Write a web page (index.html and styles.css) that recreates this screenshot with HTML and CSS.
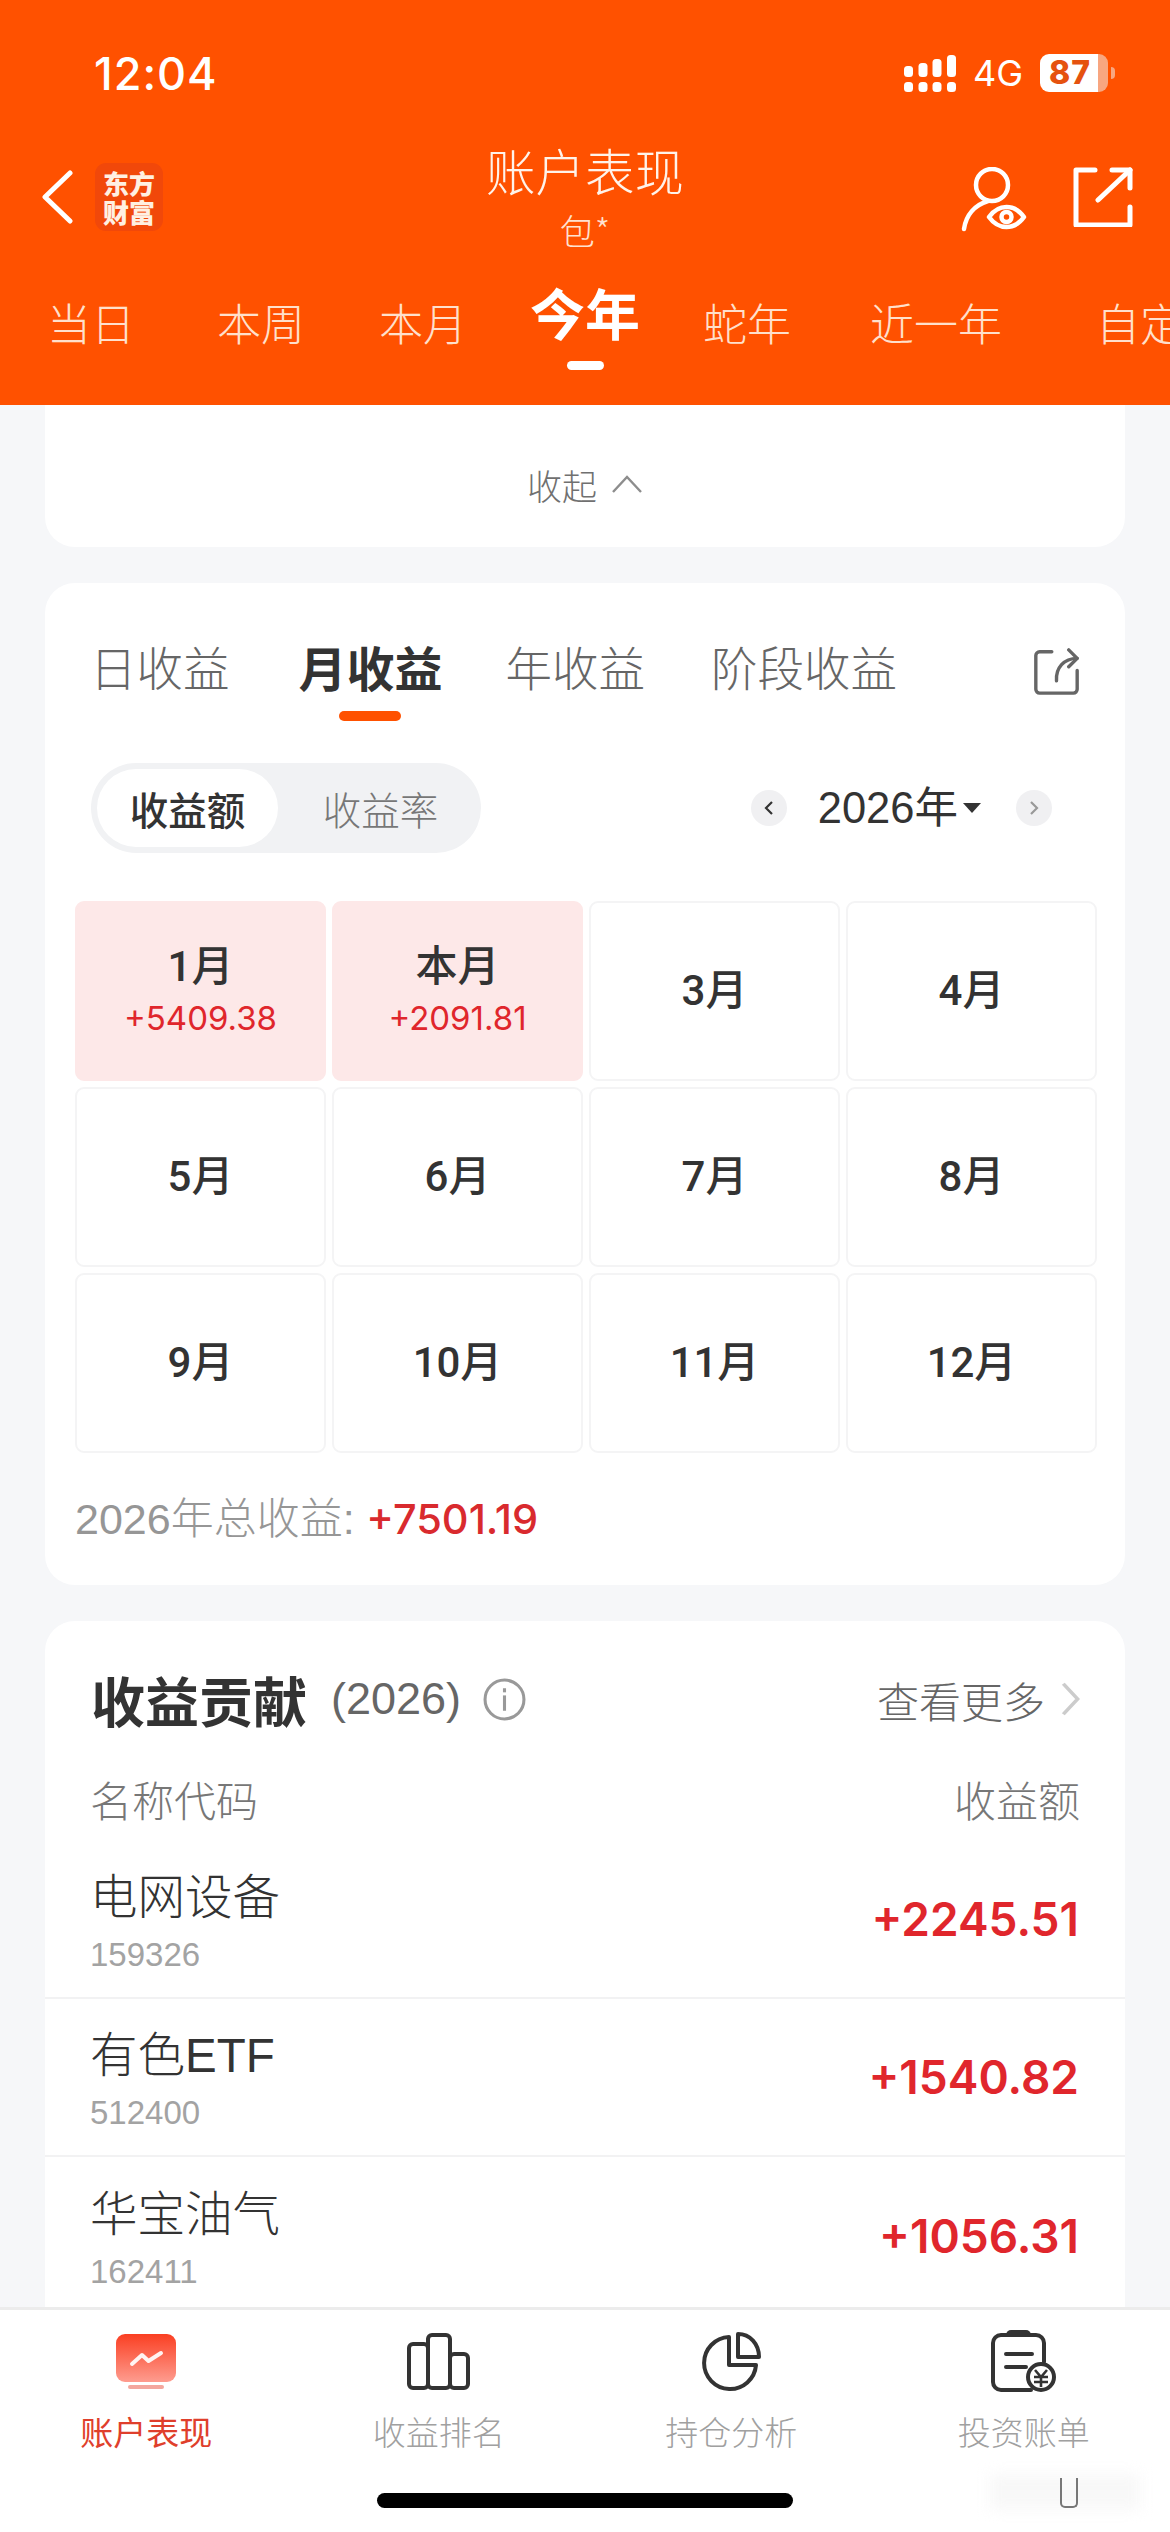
FILE: index.html
```html
<!DOCTYPE html>
<html lang="zh">
<head>
<meta charset="utf-8">
<title>账户表现</title>
<link rel="stylesheet" href="styles.css">
</head>
<body>
<div class="phone">
  <header class="top">
    <div class="status">
      <span class="clock">12:04</span>
      <div class="status-right">
        <svg class="signal" width="52" height="37" viewBox="0 0 52 37"><g fill="#fff"><rect x="0" y="11" width="9" height="11" rx="3.5"/><rect x="14.5" y="8" width="9" height="14" rx="3.5"/><rect x="28.5" y="4" width="9" height="18" rx="3.5"/><rect x="43" y="0" width="9" height="22" rx="3.5"/><rect x="0" y="27" width="9" height="10" rx="3.5"/><rect x="14.5" y="27" width="9" height="10" rx="3.5"/><rect x="28.5" y="27" width="9" height="10" rx="3.5"/><rect x="43" y="27" width="9" height="10" rx="3.5"/></g></svg>
        <span class="net">4G</span>
        <div class="battery"><span class="battery-num">87</span><i class="battery-tip"></i></div>
      </div>
    </div>
    <div class="nav">
      <div class="nav-left">
        <svg class="back" width="34" height="54" viewBox="0 0 34 54"><path d="M30 3 5 27l25 24" fill="none" stroke="#fff" stroke-width="5" stroke-linecap="round" stroke-linejoin="round"/></svg>
        <div class="logo">东方<br>财富</div>
      </div>
      <div class="nav-title"><div class="title">账户表现</div><div class="subtitle">包*</div></div>
      <div class="nav-right">
        <svg class="watch" width="66" height="66" viewBox="0 0 66 66"><g fill="none" stroke="#fff" stroke-width="4.5" stroke-linecap="round" stroke-linejoin="round"><circle cx="31" cy="18" r="16"/><path d="M3 62c2-14 11-24 24-28"/><path d="M28 50c5-7 11-10 17.500-10s12.500 3 17.500 10c-5 7-11 10-17.500 10s-12.500-3-17.500-10z"/><circle cx="45.500" cy="50" r="5"/></g></svg>
        <svg class="open" width="60" height="60" viewBox="0 0 60 60"><g fill="none" stroke="#fff" stroke-width="5" stroke-linecap="round" stroke-linejoin="round"><path d="M22 3H3v55h54V40"/><path d="M25 33 57 3"/><path d="M39 3h18v18"/></g></svg>
      </div>
    </div>
    <div class="periods">
      <span class="period p1">当日</span>
      <span class="period p2">本周</span>
      <span class="period p3">本月</span>
      <span class="period p4 on">今年</span>
      <span class="period p5">蛇年</span>
      <span class="period p6">近一年</span>
      <span class="period p7">自定义</span>
    </div>
  </header>

  <main class="content">
    <section class="card collapse-card">
      <span class="collapse-text">收起</span>
      <svg width="32" height="20" viewBox="0 0 32 20"><path d="M2 18 16 3l14 15" fill="none" stroke="#8d8d8d" stroke-width="2.400"/></svg>
    </section>

    <section class="card month-card">
      <div class="tabs">
        <span class="tab">日收益</span>
        <span class="tab tab-on">月收益</span>
        <span class="tab">年收益</span>
        <span class="tab">阶段收益</span>
        <svg class="tab-share" width="47" height="47" viewBox="0 0 50 50"><g fill="none" stroke="#666" stroke-width="3.600" stroke-linecap="round" stroke-linejoin="round"><path d="M20 4H7a4 4 0 0 0-4 4v36a4 4 0 0 0 4 4h36a4 4 0 0 0 4-4V24"/><path d="M25 35c-1-14 8-24 22-24"/><path d="M38 2l9 9-9 9"/></g></svg>
      </div>
      <div class="controls">
        <div class="seg"><span class="seg-item seg-on">收益额</span><span class="seg-item">收益率</span></div>
        <div class="year">
          <span class="round-btn"><svg width="10" height="16" viewBox="0 0 10 16"><path d="M8 2 2 8l6 6" fill="none" stroke="#333" stroke-width="2.200"/></svg></span>
          <span class="year-text">2026年</span>
          <i class="caret"></i>
          <span class="round-btn"><svg width="10" height="16" viewBox="0 0 10 16"><path d="m2 2 6 6-6 6" fill="none" stroke="#999" stroke-width="2.200"/></svg></span>
        </div>
      </div>
      <div class="months">
        <div class="cell gain"><b>1月</b><em>+5409.38</em></div>
        <div class="cell gain"><b>本月</b><em>+2091.81</em></div>
        <div class="cell"><b>3月</b></div>
        <div class="cell"><b>4月</b></div>
        <div class="cell"><b>5月</b></div>
        <div class="cell"><b>6月</b></div>
        <div class="cell"><b>7月</b></div>
        <div class="cell"><b>8月</b></div>
        <div class="cell"><b>9月</b></div>
        <div class="cell"><b>10月</b></div>
        <div class="cell"><b>11月</b></div>
        <div class="cell"><b>12月</b></div>
      </div>
      <div class="total"><span class="total-label">2026年总收益:</span> <span class="total-num">+7501.19</span></div>
    </section>

    <section class="card contrib-card">
      <div class="contrib-head">
        <span class="contrib-title">收益贡献</span>
        <span class="contrib-year">(2026)</span>
        <svg class="info" width="43" height="43" viewBox="0 0 42 42"><circle cx="21" cy="21" r="19" fill="none" stroke="#999" stroke-width="3"/><rect x="19.500" y="17" width="3" height="15" fill="#999"/><rect x="19.500" y="10" width="3" height="4" fill="#999"/></svg>
        <span class="more">查看更多</span>
        <svg class="more-arrow" width="22" height="36" viewBox="0 0 20 38" preserveAspectRatio="none"><path d="m3 3 13 16L3 35" fill="none" stroke="#ccc" stroke-width="3.400"/></svg>
      </div>
      <div class="col-head"><span>名称代码</span><span>收益额</span></div>
      <div class="row"><div><div class="row-name">电网设备</div><div class="row-code">159326</div></div><span class="row-val">+2245.51</span></div>
      <div class="row"><div><div class="row-name">有色ETF</div><div class="row-code">512400</div></div><span class="row-val">+1540.82</span></div>
      <div class="row row-last"><div><div class="row-name">华宝油气</div><div class="row-code">162411</div></div><span class="row-val">+1056.31</span></div>
    </section>
  </main>

  <nav class="bottom">
    <div class="bottom-items">
      <div class="item item-on">
        <div class="icon"><svg width="60" height="55" viewBox="0 0 60 55"><defs><linearGradient id="g" x1="0" y1="0" x2="0" y2="1"><stop offset="0" stop-color="#fa3f22"/><stop offset="1" stop-color="#fe9c8f"/></linearGradient></defs><rect x="0" y="0" width="60" height="48" rx="9" fill="url(#g)"/><rect x="12" y="51" width="36" height="4" rx="2" fill="#f4a79e"/><path d="m16 30 10-9 6.500 6L45 19" fill="none" stroke="#fff" stroke-width="4" stroke-linecap="round" stroke-linejoin="round" opacity=".92"/></svg></div>
        <span>账户表现</span>
      </div>
      <div class="item">
        <div class="icon"><svg width="63" height="57" viewBox="0 0 63 57"><g fill="none" stroke="#333" stroke-width="4" stroke-linejoin="round"><rect x="2" y="11" width="19" height="44" rx="4"/><rect x="21" y="2" width="22" height="53" rx="4"/><rect x="43" y="21" width="18" height="34" rx="4"/></g></svg></div>
        <span>收益排名</span>
      </div>
      <div class="item">
        <div class="icon"><svg width="59" height="59" viewBox="0 0 59 59"><g fill="none" stroke="#333" stroke-width="4" stroke-linejoin="round"><path d="M27 5A26 26 0 1 0 54 33H27z"/><path d="M36 2c12 0 21 10 21 23H36z"/></g></svg></div>
        <span>持仓分析</span>
      </div>
      <div class="item">
        <div class="icon"><svg width="65" height="62" viewBox="0 0 65 62"><g fill="none" stroke="#333" stroke-width="4" stroke-linecap="round"><path d="M40 60H10a8 8 0 0 1-8-8V13a8 8 0 0 1 8-8h35a8 8 0 0 1 8 8v19"/><path d="M15 24h26M15 37h20"/></g><path d="M15 5a5 5 0 0 1 5-5h15a5 5 0 0 1 5 5z" fill="#333"/><circle cx="50" cy="47" r="13" fill="#fff" stroke="#333" stroke-width="4"/><path d="m44 40 6 7 6-7M43 47h14M43 52h14M50 47v10" fill="none" stroke="#333" stroke-width="2.600"/></svg></div>
        <span>投资账单</span>
      </div>
    </div>
    <div class="home-bar"></div>
    <div class="mark"></div>
    <div class="mark-u"></div>
  </nav>
</div>
</body>
</html>
```

FILE: styles.css
```css
* { box-sizing: border-box; }
html, body { margin: 0; padding: 0; }
body { width: 1170px; height: 2532px; overflow: hidden; background: #f6f7f9; font-family: "Noto Sans CJK SC", "Noto Sans", sans-serif; }
em, i { font-style: normal; }
svg { display: block; flex: none; }
.phone { width: 1170px; height: 2532px; display: flex; flex-direction: column; overflow: hidden; }

.top { height: 405px; flex: none; background: #ff5100; color: #fff; overflow: hidden; }
.status { height: 150px; padding: 48px 62px 0 94px; display: flex; justify-content: space-between; align-items: flex-start; }
.clock { font: 500 45px/52px Inter, sans-serif; letter-spacing: 1px; }
.status-right { display: flex; align-items: center; gap: 17px; height: 50px; }
.net { font: 400 36px/40px Inter, sans-serif; }
.battery { position: relative; width: 68px; height: 38px; background: linear-gradient(90deg, #fff 86%, #f8a680 86%); border-radius: 9px; text-align: center; }
.battery-num { display: block; color: #e5520f; font: 800 32px/38px Inter, sans-serif; letter-spacing: 1px; padding-right: 8px; }
.battery-tip { position: absolute; right: -7px; top: 13px; width: 4px; height: 12px; border-radius: 0 4px 4px 0; background: #f8a680; }

.nav { height: 118px; display: flex; align-items: flex-start; padding: 0 37px 0 40px; position: relative; }
.nav-left { display: flex; align-items: center; gap: 21px; width: 300px; padding-top: 13px; }
.logo { width: 68px; height: 68px; padding-top: 5px; background: #f1480a; border-radius: 11px; text-align: center; font: 900 26px/29px "Noto Sans CJK SC", sans-serif; color: #fff0e2; }
.nav-title { position: absolute; left: 0; right: 0; top: -11px; text-align: center; }
.title { font-size: 49.500px; line-height: 62px; color: #fff3ea; font-weight: 300; }
.subtitle { font-size: 35px; line-height: 44px; margin-top: 7px; color: #ffe2d0; font-weight: 300; }
.nav-right { margin-left: auto; display: flex; align-items: flex-start; gap: 46px; padding-top: 17px; }

.periods { display: block; position: relative; height: 137px; }
.period { position: absolute; top: 26px; font-size: 44px; line-height: 56px; font-weight: 300; color: #ffe0cc; white-space: nowrap; }
.p1 { left: 47px; } .p2 { left: 217px; } .p3 { left: 379px; } .p5 { left: 703px; } .p6 { left: 870px; } .p7 { left: 1096px; }
.p4.on { left: 530px; top: 9px; font-size: 55px; line-height: 68px; font-weight: 700; color: #fff; }
.p4.on::after { content: ""; position: absolute; left: 37px; top: 84px; width: 37px; height: 9px; border-radius: 5px; background: #fff; }

.content { flex: 1; min-height: 0; overflow: hidden; display: flex; flex-direction: column; gap: 36px; }
.card { background: #fff; margin: 0 45px; border-radius: 30px; flex: none; }
.collapse-card { height: 142px; border-radius: 0 0 30px 30px; padding-top: 16px; display: flex; align-items: center; justify-content: center; gap: 14px; }
.collapse-text { font-size: 35px; color: #707070; font-weight: 300; }

.month-card { height: 1002px; padding: 0 29px; }
.tabs { display: flex; align-items: flex-start; height: 180px; padding: 49px 0 0 16px; gap: 66px; position: relative; }
.tab { font-size: 46.500px; line-height: 68px; color: #666; font-weight: 300; white-space: nowrap; }
.tab-on { position: relative; margin: 0 -3px 0 3px; font-size: 48px; color: #333; font-weight: 700; }
.tab-on::after { content: ""; position: absolute; left: 40px; top: 79px; width: 62px; height: 10px; border-radius: 5px; background: #ff5100; }
.tab-share { position: absolute; right: 16px; top: 65px; }

.controls { display: flex; justify-content: space-between; align-items: center; height: 90px; padding-left: 17px; }
.seg { width: 390px; height: 90px; background: #f1f2f4; border-radius: 45px; padding: 6px; display: flex; }
.seg-item { flex: 1; display: flex; align-items: center; justify-content: center; font-size: 38.500px; color: #777; font-weight: 300; border-radius: 39px; padding-left: 8px; }
.seg-on { flex: 0 0 181px; background: #fff; color: #333; font-weight: 500; padding: 0; }
.year { display: flex; align-items: center; padding-right: 44px; }
.round-btn { width: 36px; height: 36px; border-radius: 50%; background: #f0f0f2; display: flex; align-items: center; justify-content: center; }
.year-text { font: 400 43.500px/60px "Liberation Sans", "Noto Sans CJK SC", sans-serif; color: #333; margin-left: 31px; }
.caret { width: 0; height: 0; border: 9px solid transparent; border-top: 10px solid #333; border-bottom: 0; margin: 0 35px 0 5px; }

.months { display: grid; grid-template-columns: repeat(4, 251px); grid-auto-rows: 180px; gap: 6px; margin: 48px 0 0 1px; }
.cell { border: 2px solid #f4f4f5; border-radius: 9px; display: flex; flex-direction: column; align-items: center; justify-content: center; }
.cell b { font: 500 42px/50px Roboto, "Noto Sans CJK SC", sans-serif; color: #333; }
.cell em { font: 400 33px/44px Inter, sans-serif; color: #e0262c; margin-top: 4px; }
.gain { background: #fde8e8; border-color: #fde8e8; }

.total { margin-top: 36px; line-height: 60px; padding-left: 1px; }
.total-label { font: 300 43px/60px "Liberation Sans", "Noto Sans CJK SC", sans-serif; color: #969696; }
.total-num { font: 500 41.500px/60px Inter, sans-serif; color: #d92a2e; margin-left: 8px; }

.contrib-card { padding: 0; border-radius: 30px 30px 0 0; height: 700px; }
.contrib-head { display: flex; align-items: center; height: 76px; margin-top: 40px; padding: 0 43px 0 46px; }
.contrib-title { font-size: 54px; font-weight: 700; color: #333; }
.contrib-year { font: 300 45px/60px "Liberation Sans", sans-serif; color: #666; margin-left: 24px; }
.info { margin-left: 22px; }
.more { margin-left: auto; font-size: 42px; color: #666; font-weight: 300; margin-right: 15px; }
.col-head { display: flex; justify-content: space-between; padding: 0 45px; margin: 34px 0 14px; height: 56px; font-size: 42px; line-height: 56px; color: #777; font-weight: 300; }
.row { height: 158px; display: flex; justify-content: space-between; align-items: center; padding: 0 46px 0 45px; border-bottom: 2px solid #f2f2f3; }
.row-last { border-bottom: 0; }
.row-name { margin-top: 4px; font: 300 47.500px/62px "Liberation Sans", "Noto Sans CJK SC", sans-serif; color: #333; }
.row-code { font: 400 33px/40px "Liberation Sans", sans-serif; color: #a3a3a3; margin-top: 6px; }
.row-val { font: 600 46px/60px Inter, sans-serif; color: #e0262c; }

.bottom { height: 225px; flex: none; background: #fff; border-top: 3px solid #ececec; position: relative; z-index: 1; }
.bottom-items { display: flex; padding-top: 20px; }
.item { width: 293px; display: flex; flex-direction: column; align-items: center; }
.icon { height: 62px; display: flex; align-items: center; justify-content: center; }
.item span { font-size: 33px; line-height: 44px; color: #a0a0a0; font-weight: 300; margin-top: 17px; }
.item-on span { color: #df3f2c; font-weight: 400; }
.home-bar { position: absolute; left: 377px; top: 183px; width: 416px; height: 15px; border-radius: 8px; background: #000; }
.mark { position: absolute; left: 990px; top: 164px; width: 150px; height: 36px; background: #f8f8f8; filter: blur(7px); }
.mark-u { position: absolute; left: 1060px; top: 168px; width: 18px; height: 30px; border: 2px solid #777; border-top: 0; border-radius: 0 0 5px 5px; }
```
